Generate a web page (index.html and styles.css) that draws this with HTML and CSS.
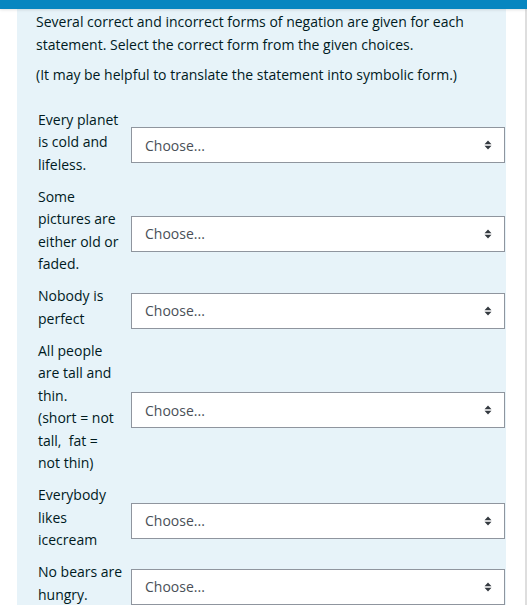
FILE: index.html
```html
<!DOCTYPE html>
<html lang="en">
<head>
<meta charset="utf-8">
<title>Negation</title>
<link rel="stylesheet" href="styles.css">
</head>
<body>
<div class="topbar"></div>
<div class="page">
  <div class="formulation">
    <p class="qtext">Several correct and incorrect forms of negation are given for each statement. Select the correct form from the given choices.</p>
    <p class="qtext">(It may be helpful to translate the statement into symbolic form.)</p>
    <div class="answers">
      <div class="row">
        <div class="label">Every planet is cold and lifeless.</div>
        <div class="control"><select class="choice"><option>Choose...</option></select><svg class="arrow" viewBox="0 0 8 10" width="8" height="10"><path d="M4 0.5 L7.5 4.3 L0.5 4.3 Z M4 9.5 L7.5 5.7 L0.5 5.7 Z"/></svg></div>
      </div>
      <div class="row">
        <div class="label">Some pictures are either old or faded.</div>
        <div class="control"><select class="choice"><option>Choose...</option></select><svg class="arrow" viewBox="0 0 8 10" width="8" height="10"><path d="M4 0.5 L7.5 4.3 L0.5 4.3 Z M4 9.5 L7.5 5.7 L0.5 5.7 Z"/></svg></div>
      </div>
      <div class="row">
        <div class="label">Nobody is perfect</div>
        <div class="control"><select class="choice"><option>Choose...</option></select><svg class="arrow" viewBox="0 0 8 10" width="8" height="10"><path d="M4 0.5 L7.5 4.3 L0.5 4.3 Z M4 9.5 L7.5 5.7 L0.5 5.7 Z"/></svg></div>
      </div>
      <div class="row">
        <div class="label">All people are tall and thin.<br>(short = not tall,&nbsp; fat =<br>not thin)</div>
        <div class="control"><select class="choice"><option>Choose...</option></select><svg class="arrow" viewBox="0 0 8 10" width="8" height="10"><path d="M4 0.5 L7.5 4.3 L0.5 4.3 Z M4 9.5 L7.5 5.7 L0.5 5.7 Z"/></svg></div>
      </div>
      <div class="row">
        <div class="label">Everybody likes icecream</div>
        <div class="control"><select class="choice"><option>Choose...</option></select><svg class="arrow" viewBox="0 0 8 10" width="8" height="10"><path d="M4 0.5 L7.5 4.3 L0.5 4.3 Z M4 9.5 L7.5 5.7 L0.5 5.7 Z"/></svg></div>
      </div>
      <div class="row">
        <div class="label">No bears are hungry.</div>
        <div class="control"><select class="choice"><option>Choose...</option></select><svg class="arrow" viewBox="0 0 8 10" width="8" height="10"><path d="M4 0.5 L7.5 4.3 L0.5 4.3 Z M4 9.5 L7.5 5.7 L0.5 5.7 Z"/></svg></div>
      </div>
    </div>
  </div>
</div>
</body>
</html>
```
FILE: styles.css
```css
html, body {
  margin: 0;
  padding: 0;
  background: #ffffff;
}
body {
  font-family: "Open Sans", "Noto Sans", sans-serif;
  font-size: 14px;
  line-height: 22.5px;
  color: #1d2125;
  width: 527px;
  height: 605px;
  overflow: hidden;
  position: relative;
}
.topbar {
  height: 9px;
  background: #0786c0;
  box-shadow: 0 1px 3px rgba(0, 0, 0, 0.12);
  position: relative;
  z-index: 2;
}
.page {
  display: flex;
  padding-left: 17px;
  border-right: 2px solid #dedede;
  height: 596px;
  box-sizing: border-box;
}
.formulation {
  width: 489px;
  background: #e7f3f9;
  padding: 2px 1px 0 19px;
  box-sizing: border-box;
  color: #001a1e;
}
.qtext {
  margin: 0 0 7.5px 0;
}
.answers {
  margin-top: 22.5px;
  display: flex;
  flex-direction: column;
  gap: 9.5px;
}
.row {
  display: flex;
  align-items: center;
}
.label {
  width: 86px;
  padding-left: 2px;
  margin-right: 7px;
  flex: none;
}
.control {
  position: relative;
  flex: none;
  width: 374px;
  margin-top: 3px;
  margin-bottom: -3px;
}
.choice {
  display: block;
  width: 374px;
  height: 36px;
  margin: 0;
  padding: 0 30px 0 13px;
  border: 1px solid #8f959e;
  border-radius: 0;
  background: #ffffff;
  color: #495057;
  font-family: inherit;
  font-size: 14px;
  -webkit-appearance: none;
  appearance: none;
}
.arrow {
  position: absolute;
  right: 13px;
  top: 13px;
  fill: #343a40;
  pointer-events: none;
}
```
